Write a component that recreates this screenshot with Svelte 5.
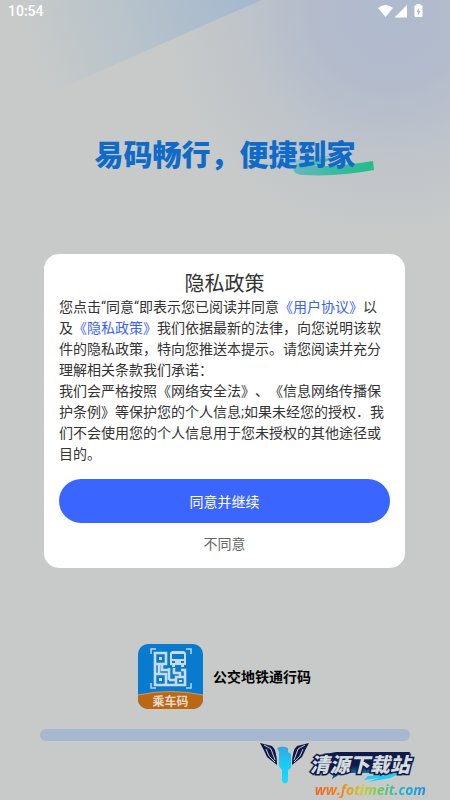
<script lang="ts">
  const slogan = '易码畅行，便捷到家';
  let agreed = $state(false);
</script>

<main class="splash">
  <svg class="sky" viewBox="0 0 450 240" preserveAspectRatio="none" aria-hidden="true">
    <defs>
      <radialGradient id="haze" gradientUnits="userSpaceOnUse" cx="390" cy="10" r="225">
        <stop offset="0" stop-color="#afbace" />
        <stop offset="0.35" stop-color="#b4bccc" />
        <stop offset="0.65" stop-color="#bfc4ca" />
        <stop offset="1" stop-color="#c7cac9" />
      </radialGradient>
      <linearGradient id="beam" gradientUnits="userSpaceOnUse" x1="250" y1="0" x2="40" y2="75">
        <stop offset="0" stop-color="#a5b8cf" />
        <stop offset="0.5" stop-color="#b6c2cb" />
        <stop offset="1" stop-color="#c7cac9" />
      </linearGradient>
    </defs>
    <rect width="450" height="240" fill="url(#haze)" />
    <path d="M0 0H262L225 16L80 80L0 110Z" fill="url(#beam)" />
  </svg>

  <header class="status">
    <time>10:54</time>
    <svg width="46" height="14" viewBox="0 0 46 14" fill="#fff" aria-label="Wi-Fi, signal, battery" role="img">
      <path d="M0 4Q7.500-2 15 4L7.500 13Z" />
      <path d="M16.500 13.500H29V1Z" />
      <path fill-rule="evenodd" d="M38.500 0h4v1.500h2V12a1 1 0 0 1-1 1h-6a1 1 0 0 1-1-1V1.500h2ZM41 4l-2.500 4H40v3.500L42.500 7H41Z" />
    </svg>
  </header>

  <h1 class="slogan">
    <svg class="swoosh" viewBox="0 0 150 30" aria-hidden="true">
      <defs>
        <linearGradient id="green" x1="0" x2="1">
          <stop offset="0" stop-color="#68b9bd" />
          <stop offset="0.5" stop-color="#3ab9a5" />
          <stop offset="1" stop-color="#24bd87" />
        </linearGradient>
        <linearGradient id="mist" x1="0" x2="1">
          <stop offset="0" stop-color="#a9c0d2" stop-opacity="0" />
          <stop offset="0.5" stop-color="#9bbfd4" />
          <stop offset="1" stop-color="#70bfc0" />
        </linearGradient>
      </defs>
      <path d="M8 17Q60 11 108 5Q85 13 60 15T8 20Z" fill="url(#mist)" />
      <path d="M112 7Q76 11 69 15Q64 24 77 25Q112 27 148 20L147 11Q112 17 88 16Z" fill="url(#green)" />
    </svg>
    <span>{slogan}</span>
  </h1>

  <section class="dialog" aria-labelledby="policy-title">
    <h2 id="policy-title">隐私政策</h2>
    <p>您点击“同意“即表示您已阅读并同意<a href="#terms">《用户协议》</a>以及<a href="#privacy">《隐私政策》</a>我们依据最新的法律，向您说明该软件的隐私政策，特向您推送本提示。请您阅读并充分理解相关条款我们承诺：</p>
    <p>我们会严格按照《网络安全法》、《信息网络传播保护条例》等保护您的个人信息;如果未经您的授权．我们不会使用您的个人信息用于您未授权的其他途径或目的。</p>
    <button class="agree" type="button" aria-pressed={agreed} onclick={() => (agreed = true)}>同意并继续</button>
    <button class="refuse" type="button" onclick={() => (agreed = false)}>不同意</button>
  </section>

  <div class="brand">
    <div class="app-icon">
      <svg viewBox="0 0 65 65" aria-hidden="true">
        <rect width="65" height="65" fill="#087bce" />
        <path d="M0 51Q32 44 65 51V65H0Z" fill="#bd6714" />
        <path d="M0 51Q32 44 65 51" fill="none" stroke="#d79a55" />
        <path d="M13 10V5H18M48 5H53V10M13 39V44H18M48 44H53V39" fill="none" stroke="#b9d5e8" stroke-width="1.500" />
        <g fill="none" stroke="#c9dbe8" stroke-width="2.600">
          <path d="M17 9H28V20H17ZM17 20V41H28V30H17M21 20V30M28 20H24V26H31V36M28 41H38M31 24V30M31 36H38M36 24V29H42V33M38 33H47V41H38ZM47 33V26H43" />
        </g>
        <path d="M21 13H24V16H21ZM21 34H24V37H21ZM41 36H44V38H41Z" fill="#c9dbe8" />
        <path fill-rule="evenodd" fill="#c9dbe8" d="M34 7H46L48 9V21H46V23H43V21H37V23H34V21H32V9ZM34 10V15H46V10ZM34 17V19H37V17ZM43 17V19H46V17Z" />
      </svg>
      <span>乘车码</span>
    </div>
    <strong>公交地铁通行码</strong>
  </div>

  <div class="progress" role="progressbar" aria-label="加载"></div>

  <footer class="mark">
    <svg class="wings" width="50" height="44" viewBox="0 0 50 44" aria-hidden="true">
      <defs>
        <linearGradient id="cyan" x1="0" y1="0" x2="0" y2="1">
          <stop offset="0" stop-color="#38a7dc" />
          <stop offset="0.5" stop-color="#17ccf7" />
          <stop offset="1" stop-color="#19dbff" />
        </linearGradient>
      </defs>
      <path d="M0 1L12 4Q17 8 17 23L7 15Q4 8 0 1ZM49 1L37 4Q32 8 32 23L42 15Q45 8 49 1Z" fill="#101a4a" />
      <path d="M4 3L11 7L15 18M6 7L9 14L15 20M45 3L38 7L34 18M43 7L40 14L34 20" fill="none" stroke="#c7cac9" />
      <path d="M17 6Q22 3 28 6V10L31 12V26L28 28V39Q25 44 22 39V28L19 24V10Z" fill="url(#cyan)" />
    </svg>
    <div class="words">
      <svg class="slash" viewBox="0 0 110 34" aria-hidden="true">
        <defs>
          <radialGradient id="glow" cx="0.5" cy="1" r="0.5">
            <stop offset="0" stop-color="#20b8ef" />
            <stop offset="1" stop-color="#101a4a" />
          </radialGradient>
        </defs>
        <path d="M26 2H100L95 23H32L22 29L24 23H4L10 5Z" fill="url(#glow)" />
        <path d="M58 26Q78 25 95 21L80 28L58 32L68 28L54 30Z" fill="#1ccdf5" />
      </svg>
      <b>清源下载站</b>
      <a href="#site">ww.fotimeit.com</a>
    </div>
  </footer>
</main>

<style>
  :global(body) { margin: 0; background: #c7cac9; }
  .splash {
    position: relative;
    isolation: isolate;
    box-sizing: border-box;
    min-height: 100vh;
    display: flex;
    flex-direction: column;
    overflow: hidden;
    background: #c7cac9;
    font-family: Roboto, "Noto Sans CJK SC", sans-serif;
    text-spacing-trim: space-all;
  }
  .sky { position: absolute; inset: 0 0 auto; width: 100%; height: 240px; z-index: -2; }
  .status {
    display: flex;
    justify-content: space-between;
    align-items: center;
    height: 22px;
    padding: 0 26px 0 8px;
    color: #fff;
    font: 500 14px/22px Roboto, sans-serif;
  }
  .slogan {
    position: relative;
    align-self: center;
    margin: 111px 0 0;
    color: #106bc8;
    font: 900 29px/40px "Noto Sans CJK SC", sans-serif;
    white-space: nowrap;
  }
  .swoosh { position: absolute; right: -20px; bottom: -7px; width: 150px; height: 30px; z-index: -1; }
  .dialog {
    display: flex;
    flex-direction: column;
    margin: 81px 45px 0 44px;
    padding: 17px 15px 10px;
    border-radius: 15px;
    background: #fff;
    color: #333;
  }
  h2 { margin: 0; font-size: 20px; line-height: 26px; font-weight: 400; text-align: center; }
  p { margin: 0; font-size: 14px; line-height: 21px; }
  a { color: #3b63f5; text-decoration: none; }
  button { border: 0; font: 400 14px/20px "Noto Sans CJK SC", sans-serif; cursor: pointer; }
  .agree { height: 44px; margin-top: 14px; border-radius: 22px; background: #3b65ff; color: #fff; }
  .refuse { align-self: center; height: 30px; margin-top: 5px; background: none; color: #666; }
  .brand { display: flex; align-items: center; justify-content: center; gap: 10px; margin: 76px 1px 0 0; }
  .app-icon { position: relative; width: 65px; height: 65px; border-radius: 10px; overflow: hidden; }
  .app-icon svg { display: block; width: 100%; height: 100%; }
  .app-icon span {
    position: absolute;
    inset: auto 0 0;
    color: #e6d9cb;
    font: 700 12px/16px "Noto Sans CJK SC", sans-serif;
    text-align: center;
  }
  .brand strong { padding-bottom: 2px; color: #000; font: 700 14px/20px "Noto Sans CJK SC", sans-serif; }
  .progress { height: 12px; margin: 20px 40px 0; border-radius: 6px; background: #a5b8cf; }
  .mark { display: flex; align-self: flex-end; margin: 1px 24px 0 0; }
  .words { position: relative; display: flex; flex-direction: column; padding-top: 7px; }
  .slash { position: absolute; left: 0; top: 8px; width: 110px; height: 34px; z-index: -1; }
  .words b {
    color: #d5dcde;
    font: italic 900 20px/30px "Noto Sans CJK SC", sans-serif;
    -webkit-text-stroke: 3px #101a4a;
    paint-order: stroke fill;
  }
  .words a {
    padding: 2px 0 0 5px;
    background: linear-gradient(90deg, #f35a20, #ed8a1c 28%, #c9cf20 46%, #59c862 64%, #1eb0d4 80%, #238ce0);
    background-clip: text;
    color: transparent;
    font: italic 700 14px/18px "Open Sans", sans-serif;
  }
</style>
